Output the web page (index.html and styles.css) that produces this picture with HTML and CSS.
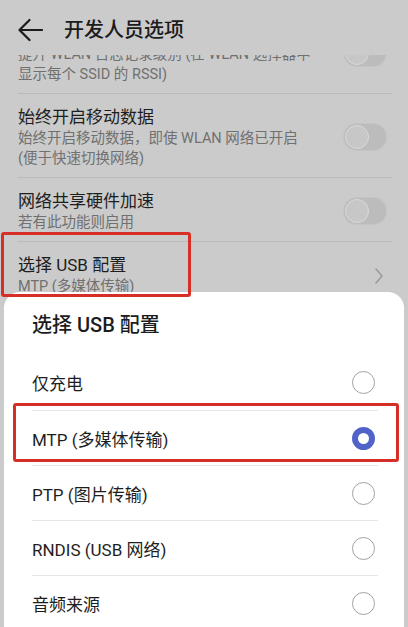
FILE: index.html
```html
<!DOCTYPE html>
<html lang="zh-CN">
<head>
<meta charset="utf-8">
<title>开发人员选项</title>
<link rel="stylesheet" href="styles.css">
</head>
<body>
<div class="screen">
  <header class="topbar">
    <svg class="back" width="26" height="24" viewBox="0 0 26 24"><path d="M2.5 12 H25 M12.5 2 L2.5 12 L12.5 22" fill="none" stroke="#1b1b1b" stroke-width="2.2" stroke-linecap="round" stroke-linejoin="round"/></svg>
    <h1 class="title">开发人员选项</h1>
  </header>
  <div class="list">
    <div class="row row-first">
      <div class="text">
        <div class="row-sub">提升 WLAN 日志记录级别 (在 WLAN 选择器中<br>显示每个 SSID 的 RSSI)</div>
      </div>
      <span class="toggle"><span class="knob"></span></span>
    </div>
    <div class="row">
      <div class="text">
        <div class="row-title">始终开启移动数据</div>
        <div class="row-sub">始终开启移动数据，即使 WLAN 网络已开启<br>(便于快速切换网络)</div>
      </div>
      <span class="toggle"><span class="knob"></span></span>
    </div>
    <div class="row">
      <div class="text">
        <div class="row-title">网络共享硬件加速</div>
        <div class="row-sub">若有此功能则启用</div>
      </div>
      <span class="toggle"><span class="knob"></span></span>
    </div>
    <div class="row">
      <div class="text">
        <div class="row-title">选择 USB 配置</div>
        <div class="row-sub">MTP (多媒体传输)</div>
      </div>
      <svg class="chev" width="10" height="18" viewBox="0 0 10 18"><path d="M2 2 L8 9 L2 16" fill="none" stroke="#9c9c9c" stroke-width="1.6" stroke-linecap="round" stroke-linejoin="round"/></svg>
    </div>
  </div>

  <div class="sheet">
    <div class="sheet-title">选择 USB 配置</div>
    <div class="option"><span>仅充电</span><span class="radio"></span></div>
    <div class="option"><span>MTP (多媒体传输)</span><span class="radio on"></span></div>
    <div class="option"><span>PTP (图片传输)</span><span class="radio"></span></div>
    <div class="option"><span>RNDIS (USB 网络)</span><span class="radio"></span></div>
    <div class="option"><span>音频来源</span><span class="radio"></span></div>
  </div>

  <div class="mark mark-usb"></div>
  <div class="mark mark-mtp"></div>
</div>
</body>
</html>
```

FILE: styles.css
```css
* { box-sizing: border-box; }
html, body { margin: 0; padding: 0; }
body {
  width: 408px;
  height: 627px;
  overflow: hidden;
  background: #cbcbcb;
  font-family: "Roboto", "Noto Sans CJK SC", "Noto Sans", sans-serif;
  color: #1e1e1e;
}
.screen {
  position: relative;
  width: 408px;
  height: 627px;
  overflow: hidden;
  background: #cbcbcb;
}
.topbar {
  height: 55px;
  display: flex;
  align-items: center;
  padding: 5px 0 0 17px;
  position: relative;
  z-index: 2;
  background: #cbcbcb;
}
.back { display: block; flex: none; }
.title {
  margin: 0 0 0 21px;
  font-size: 20px;
  font-weight: 500;
  line-height: 24px;
  color: #1b1b1b;
}
.list {
  height: 572px;
  overflow: hidden;
}
.row {
  display: flex;
  align-items: center;
  margin: 0 16px 0 18px;
  padding: 11px 6px 8px 0;
  border-bottom: 1px solid #bababa;
}
.row-first { margin-top: -21px; padding-top: 11px; }
.row-first .toggle { margin-top: -24px; }
.text { flex: 1; min-width: 0; }
.row-title {
  font-size: 17px;
  line-height: 24px;
  color: #1e1e1e;
}
.row-sub {
  font-size: 14.5px;
  line-height: 20px;
  color: #707070;
}
.toggle {
  flex: none;
  position: relative;
  width: 42px;
  height: 26px;
  border-radius: 13px;
  background: #bcbcbc;
  box-shadow: 0 0 0 1px #c4c4c4;
}
.knob {
  position: absolute;
  left: 1px;
  top: 1px;
  width: 24px;
  height: 24px;
  border-radius: 50%;
  background: #c7c7c7;
  border: 1.5px solid #dadada;
}
.chev { flex: none; margin-right: 2px; margin-top: 2px; }

.sheet {
  position: absolute;
  left: 4px;
  right: 4px;
  top: 292px;
  bottom: 0;
  background: #ffffff;
  border-radius: 16px 16px 0 0;
  padding: 0 26px 0 28px;
}
.sheet-title {
  padding: 21px 0 18px;
  font-size: 20px;
  line-height: 24px;
  font-weight: 500;
  color: #1c1c1c;
}
.option {
  height: 55px;
  display: flex;
  align-items: center;
  justify-content: space-between;
  font-size: 17px;
  color: #1e1e1e;
  border-top: 1px solid #e6e6e6;
}
.sheet-title + .option { border-top: none; }
.radio {
  width: 23px;
  height: 23px;
  border-radius: 50%;
  border: 1.2px solid #a2a2a2;
  margin-right: 3px;
}
.radio.on {
  border: 6px solid #5163c8;
}
.mark {
  position: absolute;
  border: 3px solid #d72f27;
  border-radius: 3px;
  z-index: 5;
}
.mark-usb { left: 1px; top: 232px; width: 190px; height: 65px; }
.mark-mtp { left: 13px; top: 403px; width: 386px; height: 59px; }
```
